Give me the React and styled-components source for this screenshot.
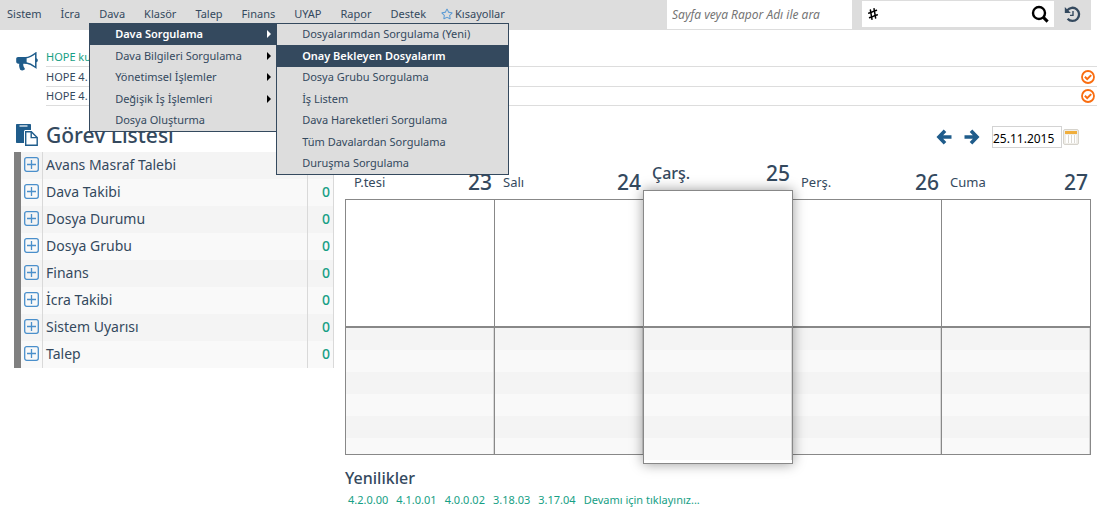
import React, { useState } from 'react';
import styled, { createGlobalStyle, css } from 'styled-components';
import { FaHashtag, FaRegStar } from 'react-icons/fa';

const GlobalStyle = createGlobalStyle`
  * {
    box-sizing: border-box;
  }

  body {
    margin: 0;
    background: #ffffff;
    color: #34495e;
    font: 12px/20px 'Noto Sans', 'Open Sans', sans-serif;
  }

  button, input {
    font: inherit;
    color: inherit;
  }

  ul {
    margin: 0;
    padding: 0;
    list-style: none;
  }
`;

const IconButton = styled.button`
  display: flex;
  align-items: center;
  padding: 0;
  border: 0;
  background: none;
  color: ${(props) => props.$color || '#1f5c8b'};
  cursor: pointer;
`;

/* Header */

const Header = styled.header`
  display: flex;
  height: 30px;
  margin-right: 6px;
  padding: 0 10px 0 7px;
  background: #dddddd;
`;

const NavList = styled.ul`
  display: flex;
  flex: 1;
  gap: 19px;
  font-size: 11px;
`;

const NavItem = styled.li`
  position: relative;
  padding-top: 4px;

  &:last-child {
    margin-left: -4px;
  }
`;

const NavLink = styled.a`
  display: flex;
  align-items: center;
  gap: 2px;
  color: inherit;
  text-decoration: none;

  svg {
    color: #5b9bd5;
  }
`;

const Menu = styled.ul`
  position: absolute;
  top: ${(props) => (props.$sub ? '-1px' : '23px')};
  left: ${(props) => (props.$sub ? '100%' : '-10px')};
  z-index: 20;
  width: ${(props) => (props.$sub ? '233px' : '188px')};
  border: 1px solid #34495e;
  background: #dddddd;
`;

const MenuItem = styled.li`
  position: relative;
  height: 21px;
  line-height: 20px;

  &:nth-child(even) {
    height: 22px;
  }
`;

const MenuLink = styled.a`
  display: flex;
  align-items: center;
  justify-content: space-between;
  height: 100%;
  padding: 0 5px 1px 25px;
  color: inherit;
  text-decoration: none;
  white-space: nowrap;

  ${(props) =>
    props.$active &&
    css`
      background: #34495e;
      color: #ffffff;
      font-weight: 600;
    `}
`;

const Caret = styled.span`
  border: 4px solid transparent;
  border-left-color: ${(props) => (props.$light ? '#ffffff' : '#000000')};
  border-right: 0;
`;

const PageSearch = styled.input`
  width: 185px;
  height: 29px;
  padding: 0 5px;
  border: 0;
  background: #ffffff;
  font-style: italic;

  &::placeholder {
    color: #757575;
    opacity: 1;
  }
`;

const RecordSearch = styled.form`
  display: flex;
  align-items: center;
  width: 192px;
  height: 26px;
  margin: 1px 10px 0;
  padding: 0 5px;
  background: #ffffff;
  color: #000000;

  input {
    flex: 1;
    min-width: 0;
    border: 0;
    outline: 0;
  }
`;

const HashIcon = styled(FaHashtag)`
  transform: rotate(-20deg);
`;

const HistoryButton = styled(IconButton)`
  height: 28px;
`;

/* Announcements */

const Announcements = styled.section`
  display: flex;
  gap: 8px;
  padding: 17px 0 0 16px;
  color: #1f5c8b;

  > svg {
    margin-top: 5px;
  }

  ul {
    flex: 1;
  }
`;

const Announcement = styled.li`
  display: flex;
  align-items: center;
  justify-content: space-between;
  height: 20px;
  padding-right: 2px;
  border-bottom: 1px solid #dddddd;
  color: ${(props) => (props.$fresh ? '#16a085' : '#34495e')};
  font-size: 11px;

  &:last-child {
    height: 19px;
  }
`;

/* Task list */

const Main = styled.main`
  display: flex;
  align-items: flex-start;
  gap: 11px;
  padding: 17px 6px 0 14px;
`;

const Tasks = styled.section`
  flex: 0 0 320px;
`;

const TasksTitle = styled.h1`
  display: flex;
  align-items: center;
  gap: 8px;
  height: 29px;
  margin: 0;
  padding: 0 0 5px 2px;
  font-size: 21px;
  font-weight: 500;

  svg {
    color: #1f5c8b;
  }
`;

const TaskTable = styled.table`
  width: 100%;
  border-collapse: collapse;
  border-left: 7px solid #808080;
  font-size: 14px;

  tr {
    height: 27px;
    background: #f9f9f9;
  }

  tr:nth-child(odd) {
    background: #f4f4f4;
  }

  td, th {
    padding: 0 3px 2px;
    border-right: 1px solid #d9d9d9;
    font-weight: normal;
    text-align: left;
  }

  td:first-child {
    width: 24px;
    padding-bottom: 3px;
  }

  td:last-child {
    width: 26px;
    color: #16a085;
    font-weight: 500;
    text-align: right;
  }
`;

/* Calendar */

const Calendar = styled.section`
  flex: 1;
  min-width: 0;
`;

const Toolbar = styled.div`
  display: flex;
  align-items: center;
  justify-content: flex-end;
  gap: 12px;
  height: 28px;
  padding-right: 12px;
`;

const DateField = styled.div`
  display: flex;
  gap: 1px;

  input {
    width: 70px;
    height: 22px;
    padding: 2px 0 0;
    border: 1px solid #d3d3d3;
    color: #000000;
    font-size: 12px;
  }
`;

const Week = styled.div`
  display: grid;
  grid-template-columns: repeat(5, 1fr);
  padding: 18px 1px 0 0;
`;

const Day = styled.article`
  display: flex;
  flex-direction: column;
  margin: ${(props) => (props.$today ? '-9px 0' : '0')};
  z-index: ${(props) => (props.$today ? 1 : 0)};
`;

const DayHead = styled.header`
  display: flex;
  justify-content: space-between;
  height: 30px;
  padding: 0 2px 0 9px;
  line-height: 26px;

  span {
    font-size: ${(props) => (props.$today ? '16px' : '13px')};
    font-weight: ${(props) => (props.$today ? 500 : 400)};
  }

  strong {
    font-size: 21px;
    font-weight: 500;
  }
`;

const DayBox = styled.div`
  flex: 1;
  margin-right: -1px;
  border: 1px solid #888888;
  background: #ffffff;
  overflow: hidden;
  box-shadow: ${(props) => (props.$today ? '0 0 12px rgba(0, 0, 0, 0.4)' : 'none')};
`;

const Meetings = styled.div`
  height: ${(props) => (props.$today ? '135px' : '126px')};
`;

const Slots = styled.div`
  height: ${(props) => (props.$today ? '137px' : '128px')};
  border-top: 2px solid #888888;
  overflow: hidden;
`;

const Slot = styled.div`
  height: 22px;
  border-right: 1px solid #d9d9d9;
  background: #f9f9f9;

  &:nth-child(odd) {
    background: #f4f4f4;
  }
`;

const News = styled.section`
  padding-top: 12px;

  h2 {
    margin: 0;
    font-size: 16px;
    font-weight: 500;
    line-height: 23px;
  }
`;

const NewsLinks = styled.nav`
  display: flex;
  gap: 8px;
  padding-left: 3px;
  font-size: 11px;

  a {
    color: #16a085;
    text-decoration: none;
  }
`;

const NAV = ['Sistem', 'İcra', 'Dava', 'Klasör', 'Talep', 'Finans', 'UYAP', 'Rapor', 'Destek'];

const DAVA_MENU = [
  {
    label: 'Dava Sorgulama',
    active: true,
    items: [
      { label: 'Dosyalarımdan Sorgulama (Yeni)' },
      { label: 'Onay Bekleyen Dosyalarım', active: true },
      { label: 'Dosya Grubu Sorgulama' },
      { label: 'İş Listem' },
      { label: 'Dava Hareketleri Sorgulama' },
      { label: 'Tüm Davalardan Sorgulama' },
      { label: 'Duruşma Sorgulama' },
    ],
  },
  { label: 'Dava Bilgileri Sorgulama', more: true },
  { label: 'Yönetimsel İşlemler', more: true },
  { label: 'Değişik İş İşlemleri', more: true },
  { label: 'Dosya Oluşturma' },
];

const ANNOUNCEMENTS = [
  { id: 1, text: 'HOPE ku', fresh: true },
  { id: 2, text: 'HOPE 4.' },
  { id: 3, text: 'HOPE 4.' },
];

const TASKS = [
  'Avans Masraf Talebi',
  'Dava Takibi',
  'Dosya Durumu',
  'Dosya Grubu',
  'Finans',
  'İcra Takibi',
  'Sistem Uyarısı',
  'Talep',
];

const DAYS = [
  { name: 'P.tesi', date: 23 },
  { name: 'Salı', date: 24 },
  { name: 'Çarş.', date: 25, today: true },
  { name: 'Perş.', date: 26 },
  { name: 'Cuma', date: 27 },
];

const NEWS = ['4.2.0.00', '4.1.0.01', '4.0.0.02', '3.18.03', '3.17.04', 'Devamı için tıklayınız...'];

function SearchIcon() {
  return (
    <svg width='18' height='18' viewBox='0 0 18 18' fill='none' stroke='currentColor'>
      <circle cx='8' cy='8' r='6' strokeWidth='2.4' />
      <path d='M12.4 12.4L16.6 16.6' strokeWidth='3' />
    </svg>
  );
}

function HistoryIcon() {
  return (
    <svg width='17' height='17' viewBox='0 0 17 17' fill='none' stroke='currentColor'>
      <path d='M3.2 4.4A6.6 6.6 0 1 1 3.6 12.8' strokeWidth='2.3' />
      <path d='M0.8 1v6h6z' fill='currentColor' stroke='none' />
      <path d='M9 5v4.4H6' strokeWidth='1.4' />
    </svg>
  );
}

function BullhornIcon() {
  return (
    <svg width='22' height='20' viewBox='0 0 22 20' fill='#1f5c8b'>
      <path d='M2 5h9v6.500H7.400c-.5 1.600.2 2.600.4 3.600.2.8 1.400 1.400 1 2.200-.8 1.400-3.600 1.400-4.600.4-.6-1.500-1.500-3.300-.9-6.200H2c-1 0-1.800-.8-1.800-1.800V6.800C.2 5.800 1 5 2 5z' />
      <path d='M9.500 5.800C13 5.400 16.500 3.600 19.800 1v14.500c-3.300-2.600-6.800-4.300-10.300-4.700z' fill='#ffffff' stroke='#1f5c8b' strokeWidth='1.500' />
      <path d='M2 5h8.500v6.500H2z' />
      <path d='M20 6.300c2.400 0 2.400 4 0 4z' />
    </svg>
  );
}

function PasteIcon() {
  return (
    <svg width='22' height='22' viewBox='0 0 22 22'>
      <path d='M1 0h13c.6 0 1 .4 1 1v5H9.500C8.700 6 8 6.700 8 7.500V19H1c-.6 0-1-.4-1-1V1c0-.6.4-1 1-1z' fill='#1f5c8b' />
      <path d='M3.500 2h8' stroke='#ffffff' strokeWidth='1.200' />
      <path d='M9.700 7.700h5.600l5.900 5.900v7.600H9.700z' fill='#ffffff' stroke='#1f5c8b' strokeWidth='1.400' />
      <path d='M15.200 7.700v5.900h6' fill='none' stroke='#1f5c8b' strokeWidth='1.400' />
    </svg>
  );
}

function CheckIcon() {
  return (
    <svg width='14' height='14' viewBox='0 0 14 14' fill='none' stroke='currentColor' strokeWidth='1.8'>
      <circle cx='7' cy='7' r='6' />
      <path d='M3.900 6.800l2.300 2.300 4-4' strokeWidth='2' />
    </svg>
  );
}

function ArrowIcon({ right }) {
  return (
    <svg width='16' height='16' viewBox='0 0 16 16' fill='none' stroke='currentColor' strokeWidth='3.600'>
      {right ? <path d='M0.500 8H13M7 1.800L13 8L7 14.200' /> : <path d='M15.500 8H3M9 1.800L3 8L9 14.200' />}
    </svg>
  );
}

function PlusIcon() {
  return (
    <svg width='15' height='15' viewBox='0 0 15 15' fill='none' stroke='#4a8fcb'>
      <rect x='0.7' y='0.7' width='13.6' height='13.6' rx='2' strokeWidth='1.3' />
      <path d='M7.500 3v9M3 7.500h9' strokeWidth='1.3' />
    </svg>
  );
}

function CalendarIcon() {
  return (
    <svg width='16' height='16' viewBox='0 0 16 16'>
      <rect x='0.5' y='0.5' width='15' height='15' rx='1.5' fill='#f0eee9' stroke='#d6d3cc' />
      <rect x='2' y='2' width='12' height='3' fill='#f0ae3c' />
      <rect x='3' y='6' width='10' height='8' fill='#ffffff' />
      <path d='M5.500 6v8M8.500 6v8M11.500 6v8' stroke='#dcdad4' />
    </svg>
  );
}

function DropMenu({ items, sub }) {
  return (
    <Menu $sub={sub}>
      {items.map((item) => (
        <MenuItem key={item.label}>
          <MenuLink href='#' $active={item.active}>
            {item.label}
            {(item.items || item.more) && <Caret $light={item.active} />}
          </MenuLink>
          {item.items && <DropMenu items={item.items} sub />}
        </MenuItem>
      ))}
    </Menu>
  );
}

export default function App() {
  const [date, setDate] = useState('25.11.2015');

  return (
    <>
      <GlobalStyle />
      <Header>
        <NavList>
          {NAV.map((name) => (
            <NavItem key={name}>
              <NavLink href='#'>{name}</NavLink>
              {name === 'Dava' && <DropMenu items={DAVA_MENU} />}
            </NavItem>
          ))}
          <NavItem>
            <NavLink href='#'>
              <FaRegStar size={12} />
              Kısayollar
            </NavLink>
          </NavItem>
        </NavList>
        <PageSearch aria-label='Sayfa ara' placeholder='Sayfa veya Rapor Adı ile ara' />
        <RecordSearch>
          <HashIcon size={12} />
          <input aria-label='Kayıt no' />
          <IconButton type='button' aria-label='Ara' $color='#000000'>
            <SearchIcon />
          </IconButton>
        </RecordSearch>
        <HistoryButton aria-label='Geçmiş' $color='#34495e'>
          <HistoryIcon />
        </HistoryButton>
      </Header>

      <Announcements>
        <BullhornIcon />
        <ul>
          {ANNOUNCEMENTS.map((item) => (
            <Announcement key={item.id} $fresh={item.fresh}>
              {item.text}
              {!item.fresh && (
                <IconButton aria-label='Okundu' $color='#f96d10'>
                  <CheckIcon />
                </IconButton>
              )}
            </Announcement>
          ))}
        </ul>
      </Announcements>

      <Main>
        <Tasks>
          <TasksTitle>
            <PasteIcon />
            Görev Listesi
          </TasksTitle>
          <TaskTable>
            <tbody>
              {TASKS.map((task) => (
                <tr key={task}>
                  <td>
                    <IconButton aria-label={`${task} aç`}>
                      <PlusIcon />
                    </IconButton>
                  </td>
                  <th scope='row'>{task}</th>
                  <td>0</td>
                </tr>
              ))}
            </tbody>
          </TaskTable>
        </Tasks>

        <Calendar>
          <Toolbar>
            <IconButton aria-label='Önceki hafta'>
              <ArrowIcon />
            </IconButton>
            <IconButton aria-label='Sonraki hafta'>
              <ArrowIcon right />
            </IconButton>
            <DateField>
              <input aria-label='Tarih' value={date} onChange={(e) => setDate(e.target.value)} />
              <IconButton aria-label='Takvim'>
                <CalendarIcon />
              </IconButton>
            </DateField>
          </Toolbar>
          <Week>
            {DAYS.map((day) => (
              <Day key={day.name} $today={day.today}>
                <DayHead $today={day.today}>
                  <span>{day.name}</span>
                  <strong>{day.date}</strong>
                </DayHead>
                <DayBox $today={day.today}>
                  <Meetings $today={day.today} />
                  <Slots $today={day.today}>
                    {[1, 2, 3, 4, 5, 6].map((slot) => (
                      <Slot key={slot} />
                    ))}
                  </Slots>
                </DayBox>
              </Day>
            ))}
          </Week>
          <News>
            <h2>Yenilikler</h2>
            <NewsLinks>
              {NEWS.map((item) => (
                <a key={item} href='#'>
                  {item}
                </a>
              ))}
            </NewsLinks>
          </News>
        </Calendar>
      </Main>
    </>
  );
}
